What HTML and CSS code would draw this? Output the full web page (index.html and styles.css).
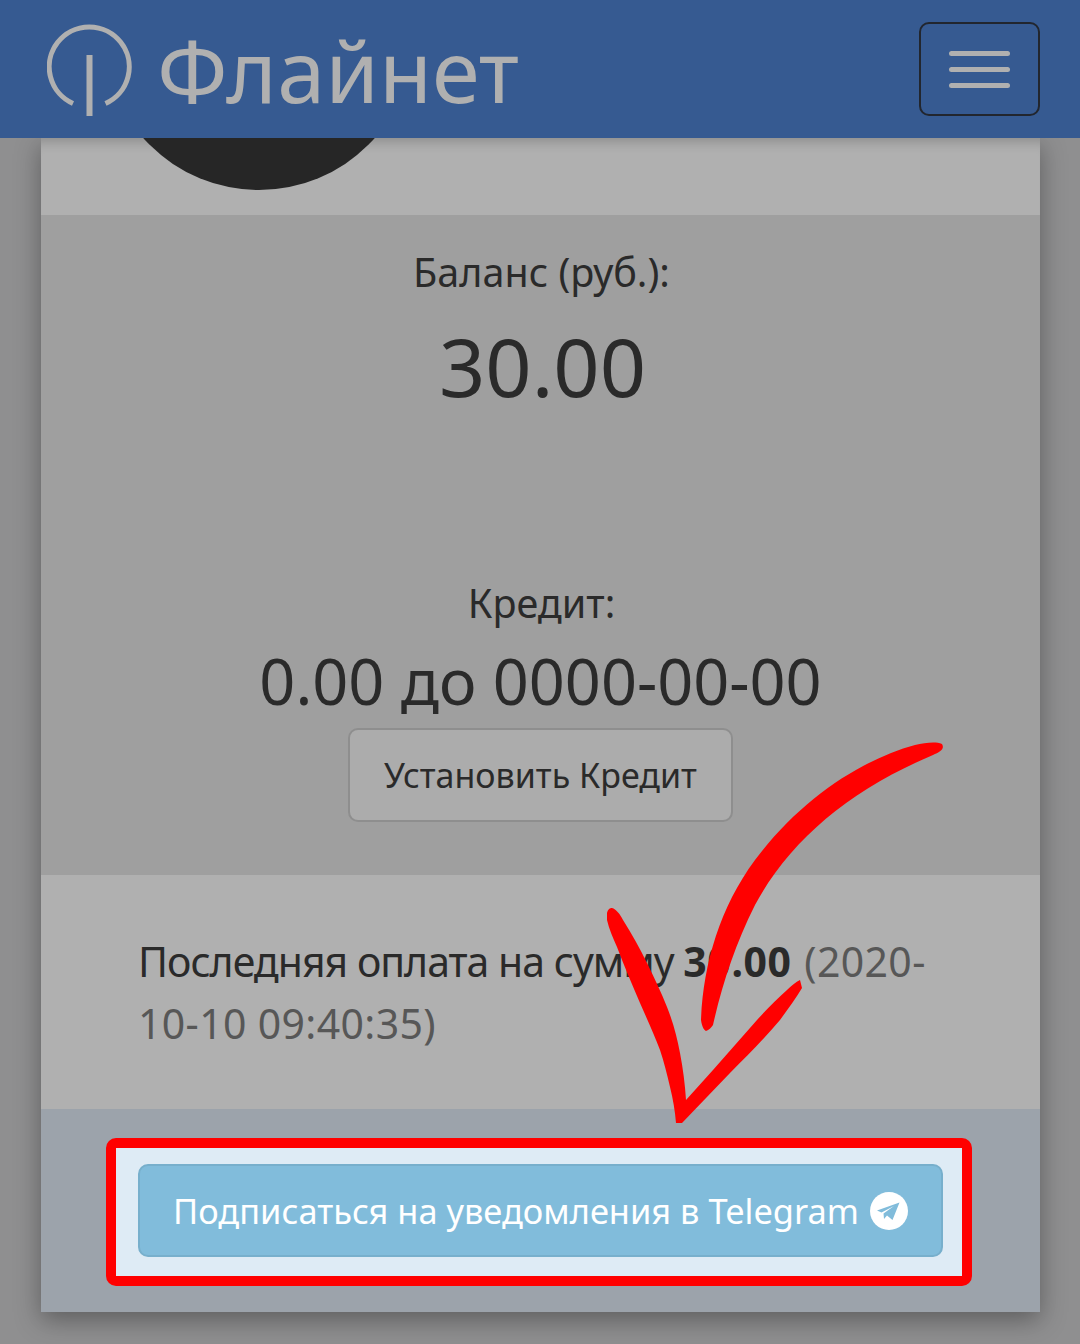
FILE: index.html
```html
<!DOCTYPE html>
<html lang="ru">
<head>
<meta charset="utf-8">
<title>Флайнет</title>
<link rel="stylesheet" href="styles.css">
</head>
<body>
<div class="page">
  <header class="topbar">
    <a class="brand">
      <svg class="brand-mark" viewBox="0 0 94 100" width="94" height="100" aria-hidden="true">
        <path class="mark-stroke" d="M26 82.500A40 40 0 1 1 58.500 82.500"/>
        <path class="mark-stroke mark-line" d="M42.500 34V95"/>
      </svg>
      <span class="brand-name">Флайнет</span>
    </a>
    <button class="burger" aria-label="Меню">
      <span class="burger-bar"></span>
      <span class="burger-bar"></span>
      <span class="burger-bar"></span>
    </button>
  </header>
  <main class="card">
    <section class="sec sec-avatar"><div class="avatar"></div></section>
    <section class="sec sec-balance">
      <div class="label label-balance">Баланс (руб.):</div>
      <div class="amount">30.00</div>
      <div class="label label-credit">Кредит:</div>
      <div class="credit">0.00 до 0000-00-00</div>
      <button class="btn-credit">Установить Кредит</button>
    </section>
    <section class="sec sec-last">
      <p class="last">Последняя оплата на сумму <b>30.00</b> <span class="muted">(2020-10-10 09:40:35)</span></p>
    </section>
    <section class="sec sec-tg">
      <div class="highlight">
        <button class="btn-tg">Подписаться на уведомления в Telegram
          <svg class="tg-icon" viewBox="0 0 38 38" width="38" height="38" aria-hidden="true">
            <circle cx="19" cy="19" r="19" fill="#fff"/>
            <path fill="#81bcdb" d="M7 18.500 29.500 10.500 22.500 28 17 23.500 14 27 13.500 21.500 24 14 11.500 20.500Z"/>
          </svg>
        </button>
      </div>
    </section>
  </main>
  <svg class="arrow" viewBox="0 0 1080 1344" width="1080" height="1344" aria-hidden="true">
    <path fill="#ff0000" d="M942 744C935 741 925 743 915 745C860 760 800 800 755 860C720 907 703 965 701 1020C702 1027 704 1030 706 1031C709 1030 711 1028 713 1025C722 985 735 945 755 905C790 840 850 790 933 755C940 752 945 749 942 744Z"/>
    <path fill="#ff0000" d="M607 913C608 909 610 908 612 908C616 909 620 914 623 920C632 934 640 949 647 963C654 977 661 992 667 1007C673 1022 677 1037 680 1053C683 1069 685 1084 686 1100L713 1070L757 1020C767 1009 777 999 787 990C791 986 796 982 800 980L802 988C796 998 788 1009 780 1020C764 1039 747 1056 730 1073L682 1123H676C675 1111 673 1099 670 1087C667 1074 664 1062 660 1050C654 1034 647 1019 640 1003C632 984 624 966 617 947C613 938 609 929 607 920Z"/>
  </svg>
</div>
</body>
</html>
```
FILE: styles.css
```css
* { box-sizing: border-box; }
html, body { margin: 0; padding: 0; }
body {
  background: #8f8f90;
  color: #2a2a2a;
  font-family: "Noto Sans", "Open Sans", sans-serif;
}
.page {
  position: relative;
  width: 1080px;
  height: 1344px;
  overflow: hidden;
}
.topbar {
  position: relative;
  z-index: 2;
  height: 138px;
  background: #365a91;
  display: flex;
  align-items: flex-start;
  justify-content: space-between;
  padding: 22px 40px 0 47px;
}
.brand { display: flex; align-items: center; gap: 16px; }
.brand-mark { display: block; margin-top: -1px; }
.mark-stroke { fill: none; stroke: #b0b0b0; stroke-width: 5; }
.mark-line { stroke-width: 6; }
.brand-name {
  color: #b0b0b0;
  font-size: 86.500px;
  line-height: 100px;
  margin-top: -4px;
}
.burger {
  width: 121px;
  height: 94px;
  background: transparent;
  border: 2px solid #22262e;
  border-radius: 10px;
  display: flex;
  flex-direction: column;
  align-items: center;
  justify-content: center;
  gap: 11px;
  padding: 0;
}
.burger-bar {
  display: block;
  width: 61px;
  height: 5px;
  border-radius: 3px;
  background: #b0b0b0;
}
.card {
  position: relative;
  width: 999px;
  margin-left: 41px;
  height: 1174px;
  box-shadow: 0 8px 24px rgba(0, 0, 0, .35);
}
.sec { overflow: hidden; }
.sec-avatar {
  height: 77px;
  background: #b0b0b0;
  box-shadow: inset 0 14px 12px -10px rgba(0, 0, 0, .2);
}
.avatar {
  width: 310px;
  height: 310px;
  margin: -258px 0 0 63px;
  border-radius: 50%;
  background: #262626;
}
.sec-balance {
  height: 660px;
  background: #9f9f9f;
  display: flex;
  flex-direction: column;
  align-items: center;
}
.label { font-size: 39.500px; line-height: 50px; margin-left: 2px; }
.label-balance { margin-top: 32px; }
.amount { font-size: 81px; line-height: 104px; margin: 17px 0 0 4px; }
.label-credit { margin-top: 160px; }
.credit { font-size: 63px; line-height: 80px; margin-top: 13px; }
.btn-credit {
  width: 385px;
  height: 94px;
  margin-top: 7px;
  background: #acacac;
  border: 2px solid #8e8e8e;
  border-radius: 10px;
  color: #2a2a2a;
  font: inherit;
  font-size: 34px;
  padding: 0;
}
.sec-last {
  height: 234px;
  background: #b0b0b0;
  padding: 55px 90px 0 97px;
}
.last { margin: 0; font-size: 41px; line-height: 62px; letter-spacing: -1px; }
.last b { font-weight: 700; letter-spacing: .6px; }
.muted { color: #575757; letter-spacing: .35px; margin-left: 3px; }
.sec-tg {
  height: 203px;
  background: #9ca3ab;
  padding: 29px 68px 0 65px;
}
.highlight {
  height: 148px;
  background: #deebf5;
  border: 10px solid #ff0000;
  border-radius: 10px;
  padding: 16px 19px 19px 22px;
}
.btn-tg {
  width: 100%;
  height: 93px;
  background: #81bcdb;
  border: 2px solid #77afcc;
  border-radius: 10px;
  color: #fff;
  font: inherit;
  font-size: 34.400px;
  display: flex;
  align-items: center;
  justify-content: center;
  gap: 11px;
  padding: 0;
  white-space: nowrap;
}
.tg-icon { display: block; flex: none; }
.arrow {
  position: absolute;
  left: 0;
  top: 0;
  z-index: 3;
  pointer-events: none;
}
```
